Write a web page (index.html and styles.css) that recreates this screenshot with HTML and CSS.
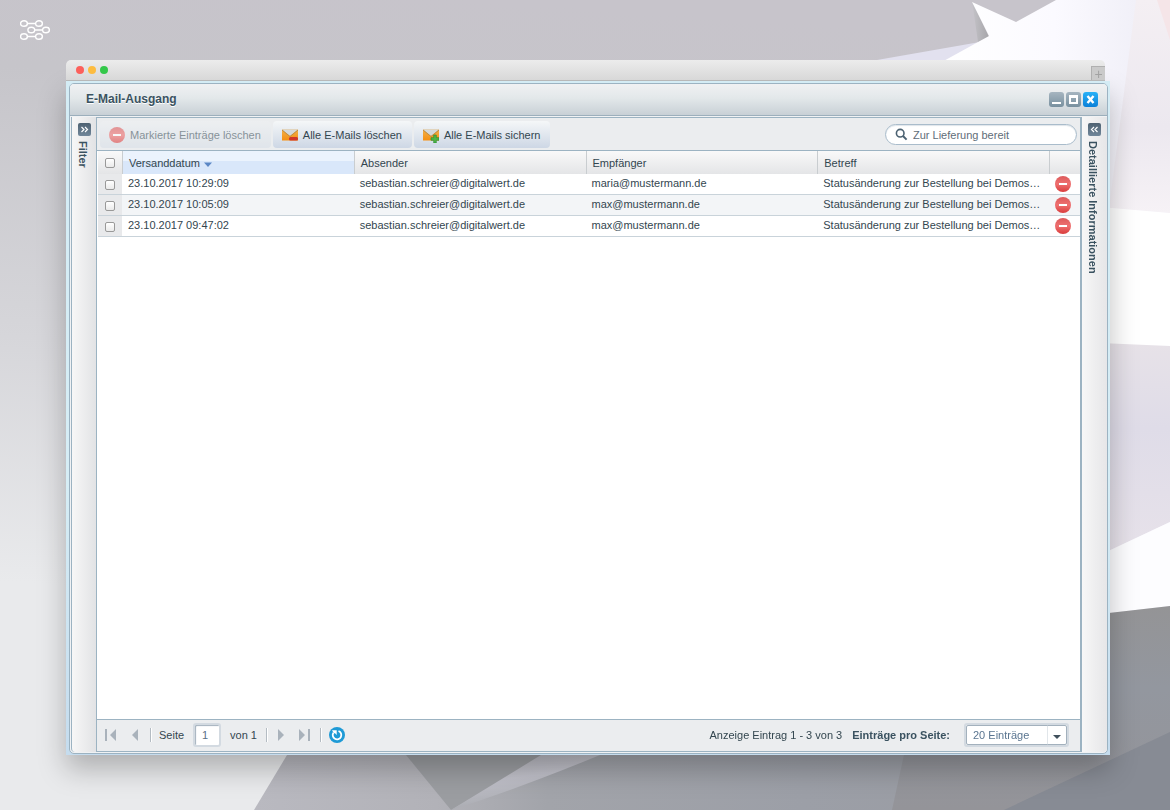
FILE: index.html
```html
<!DOCTYPE html>
<html lang="de">
<head>
<meta charset="utf-8">
<meta name="viewport" content="width=device-width, initial-scale=1">
<title>E-Mail-Ausgang</title>
<link rel="stylesheet" href="styles.css">
</head>
<body>
<svg class="backdrop" viewBox="0 0 1170 810" preserveAspectRatio="none" aria-hidden="true">
  <defs>
    <linearGradient id="wall" x1="0.4" y1="0" x2="0.3" y2="1"><stop offset="0" stop-color="#c7c4cb"/><stop offset=".12" stop-color="#c6c5ca"/><stop offset=".45" stop-color="#d6d6da"/><stop offset=".75" stop-color="#e9eaec"/><stop offset="1" stop-color="#e9eaec"/></linearGradient>
    <linearGradient id="floor" x1="0" y1="0" x2="1" y2="0"><stop offset="0" stop-color="#b9b9c0"/><stop offset=".2" stop-color="#b2b2b8"/><stop offset=".32" stop-color="#a2a4aa"/><stop offset=".6" stop-color="#9c9fa7"/><stop offset="1" stop-color="#989aa0"/></linearGradient>
    <linearGradient id="sheet" x1="0" y1="0" x2="1" y2="0"><stop offset="0" stop-color="#fff"/><stop offset=".5" stop-color="#fbfaff"/><stop offset=".85" stop-color="#f1f0f8"/><stop offset="1" stop-color="#f1eff8"/></linearGradient>
    <linearGradient id="side" x1="0" y1="0" x2="0" y2="1"><stop offset="0" stop-color="#f4eff3"/><stop offset=".6" stop-color="#ece8ef"/><stop offset="1" stop-color="#f6f2f6"/></linearGradient>
    <linearGradient id="block" x1="0" y1="0" x2="0" y2="1"><stop offset="0" stop-color="#e7e2e8"/><stop offset=".4" stop-color="#dfdce8"/><stop offset="1" stop-color="#e7e2ea"/></linearGradient>
    <linearGradient id="dark" x1="0" y1="0" x2="0" y2="1"><stop offset="0" stop-color="#949496"/><stop offset=".4" stop-color="#93979f"/><stop offset="1" stop-color="#949499"/></linearGradient>
    <linearGradient id="fold" x1="0" y1="0" x2="1" y2="0"><stop offset="0" stop-color="#c4c3c8"/><stop offset="1" stop-color="#a6a5a9"/></linearGradient>
    <linearGradient id="ray" x1="0" y1="0" x2=".35" y2="1"><stop offset="0" stop-color="#b4b4bb"/><stop offset=".5" stop-color="#c1c1ca"/><stop offset="1" stop-color="#a5a7ac"/></linearGradient>
  </defs>
  <rect width="1170" height="810" fill="url(#wall)"/>
  <path d="M877 60 980 42 1080 20V810H877Z" fill="#e2e1ef"/>
  <path d="M972 1 989 37 978 42Z" fill="url(#fold)"/>
  <path d="M972 2 1016 22 1056 0H1170V810H940V63L989 36Z" fill="url(#sheet)"/>
  <path d="M1136 0H1170V213L1109 208Z" fill="url(#side)"/>
  <path d="M1100 207 1170 213V350H1100Z" fill="#fff"/>
  <path d="M1157 0H1170V40Z" fill="#f5e5e8"/>
  <path d="M1100 343 1170 346V522L1100 555Z" fill="url(#block)"/>
  <path d="M1100 555 1170 522V606L1100 614Z" fill="#fdfdff"/>
  <path d="M287 755 254 810H1170V700H320Z" fill="url(#floor)"/>
  <path d="M406 755H545L451 810Z" fill="#9b9da1"/>
  <path d="M451 810 541 755H600Q520 788 451 810Z" fill="url(#ray)"/>
  <path d="M905 750 892 810H1170V606L1100 614Z" fill="url(#dark)"/>
  <path d="M1004 810 1170 732V810Z" fill="#878b94"/>
</svg>
<header class="brand">
  <a href="#" class="brand-link" aria-label="Startseite">
    <svg width="30" height="20" viewBox="0 0 30 20" fill="none" stroke="#fff" stroke-width="1.4"><ellipse cx="4" cy="3.5" rx="3.4" ry="2.8"/><ellipse cx="19" cy="3.5" rx="3.4" ry="2.8"/><ellipse cx="11.300" cy="10" rx="3.4" ry="2.8"/><ellipse cx="26" cy="10" rx="3.4" ry="2.8"/><ellipse cx="4" cy="16.500" rx="3.400" ry="2.800"/><ellipse cx="19" cy="16.500" rx="3.400" ry="2.800"/><path d="M7.500 3.500h8M14.700 10h8M7.500 16.500h8"/></svg>
  </a>
</header>
<main class="browser">
  <div class="chrome">
    <span class="light light-red"></span><span class="light light-yellow"></span><span class="light light-green"></span>
    <button class="new-tab" type="button" aria-label="Neuer Tab">+</button>
  </div>
  <div class="frame">
    <section class="window">
      <div class="titlebar">
        <h1 class="title">E-Mail-Ausgang</h1>
        <button class="win-btn" type="button" aria-label="Minimieren"><svg width="15" height="15" viewBox="0 0 15 15"><path d="M3 10h9v2H3z" fill="#fff"/></svg></button>
        <button class="win-btn" type="button" aria-label="Maximieren"><svg width="15" height="15" viewBox="0 0 15 15"><path fill-rule="evenodd" d="M3 3h9v9H3zM5 6v4h5V6z" fill="#fff"/></svg></button>
        <button class="win-btn win-close" type="button" aria-label="Schließen"><svg width="15" height="15" viewBox="0 0 15 15"><path d="M4.500 4 10.500 11M10.500 4 4.500 11" stroke="#fff" stroke-width="2.400"/></svg></button>
      </div>
      <div class="workspace">
        <aside class="rail rail-left">
          <button class="rail-btn" type="button" aria-label="Filter ausklappen"><svg width="13" height="13" viewBox="0 0 13 13" fill="none" stroke="#fff" stroke-width="1.200"><path d="M3.500 4 6 6.500 3.500 9M7 4l2.500 2.500L7 9"/></svg></button>
          <span class="rail-label">Filter</span>
        </aside>
        <div class="panel">
          <div class="toolbar">
            <button class="tool" type="button" disabled><svg width="16" height="16" viewBox="0 0 16 16"><use href="#minus"/></svg>Markierte Einträge löschen</button>
            <button class="tool" type="button"><svg width="16" height="16" viewBox="0 0 16 16"><use href="#mail"/><rect x="7" y="10" width="9" height="3.500" rx="1.500" fill="#cf352b"/></svg>Alle E-Mails löschen</button>
            <button class="tool" type="button"><svg width="16" height="16" viewBox="0 0 16 16"><use href="#mail"/><path d="M10.700 8h2.600v2.700H16v2.600h-2.700V16h-2.600v-2.700H8v-2.600h2.700z" fill="#4db548" stroke="#23852a" stroke-width=".6"/></svg>Alle E-Mails sichern</button>
            <label class="search"><svg width="13" height="13" viewBox="0 0 13 13" fill="none" stroke="#4c6272"><circle cx="5.200" cy="5.200" r="3.800" stroke-width="1.600"/><path d="M8 8l3.600 3.600" stroke-width="2"/></svg><input class="search-input" type="text" value="Zur Lieferung bereit" aria-label="Suche"></label>
          </div>
          <div class="grid">
            <table class="mails">
              <colgroup><col class="c-check"><col><col><col><col><col class="c-action"></colgroup>
              <thead><tr>
                <th><input class="check" type="checkbox" aria-label="Alle auswählen"></th>
                <th class="sorted">Versanddatum<svg class="sort" width="8" height="5" viewBox="0 0 8 5"><path d="M0 .5h8L4 5z" fill="#5b87c5"/></svg></th>
                <th>Absender</th><th>Empfänger</th><th>Betreff</th><th></th>
              </tr></thead>
              <tbody>
                <tr><td><input class="check" type="checkbox" aria-label="Zeile 1 auswählen"></td><td>23.10.2017 10:29:09</td><td>sebastian.schreier@digitalwert.de</td><td>maria@mustermann.de</td><td>Statusänderung zur Bestellung bei Demoshop</td><td><button class="remove" type="button" aria-label="Löschen"><svg width="16" height="16" viewBox="0 0 16 16"><use href="#minus"/></svg></button></td></tr>
                <tr><td><input class="check" type="checkbox" aria-label="Zeile 2 auswählen"></td><td>23.10.2017 10:05:09</td><td>sebastian.schreier@digitalwert.de</td><td>max@mustermann.de</td><td>Statusänderung zur Bestellung bei Demoshop</td><td><button class="remove" type="button" aria-label="Löschen"><svg width="16" height="16" viewBox="0 0 16 16"><use href="#minus"/></svg></button></td></tr>
                <tr><td><input class="check" type="checkbox" aria-label="Zeile 3 auswählen"></td><td>23.10.2017 09:47:02</td><td>sebastian.schreier@digitalwert.de</td><td>max@mustermann.de</td><td>Statusänderung zur Bestellung bei Demoshop</td><td><button class="remove" type="button" aria-label="Löschen"><svg width="16" height="16" viewBox="0 0 16 16"><use href="#minus"/></svg></button></td></tr>
              </tbody>
            </table>
          </div>
          <div class="pager">
            <div class="pager-nav">
              <button class="nav" type="button" aria-label="Erste Seite"><svg width="13" height="12" viewBox="0 0 13 12" fill="#a9b2bb"><path d="M0 0h2v12H0zM11 0v12L5 6z"/></svg></button>
              <button class="nav" type="button" aria-label="Vorherige Seite"><svg width="12" height="12" viewBox="0 0 12 12" fill="#a9b2bb"><path d="M10 0v12L4 6z"/></svg></button>
              <span class="sep"></span>
              <label class="page-label" for="page">Seite</label>
              <input class="page-input" id="page" type="text" value="1">
              <span class="page-total">von 1</span>
              <span class="sep"></span>
              <button class="nav" type="button" aria-label="Nächste Seite"><svg width="12" height="12" viewBox="0 0 12 12" fill="#a9b2bb"><path d="M3 0l6 6-6 6z"/></svg></button>
              <button class="nav" type="button" aria-label="Letzte Seite"><svg width="13" height="12" viewBox="0 0 13 12" fill="#a9b2bb"><path d="M11 0h2v12h-2zM2 0l6 6-6 6z"/></svg></button>
              <span class="sep"></span>
              <button class="nav" type="button" aria-label="Aktualisieren"><svg width="16" height="16" viewBox="0 0 16 16"><circle cx="8" cy="8" r="8" fill="#1e9ad6"/><path d="M9.500 4A4.300 4.300 0 1 1 4.400 5.700" fill="none" stroke="#fff" stroke-width="1.800"/><path d="M3 3.200h4.700v4.700L6 6.300 4.800 6.300z" fill="#fff"/></svg></button>
            </div>
            <span class="count">Anzeige Eintrag 1 - 3 von 3</span>
            <label class="size-label" for="size">Einträge pro Seite:</label>
            <span class="select"><select class="size" id="size"><option>20 Einträge</option></select><svg class="arrow" width="20" height="20" viewBox="0 0 20 20"><path d="M0 0v20" stroke="#c3cdd5"/><path d="M6 10h8l-4 4z" fill="#40505c"/></svg></span>
          </div>
        </div>
        <aside class="rail rail-right">
          <button class="rail-btn" type="button" aria-label="Details ausklappen"><svg width="13" height="13" viewBox="0 0 13 13" fill="none" stroke="#fff" stroke-width="1.200"><path d="M6 4 3.500 6.500 6 9M9.500 4 7 6.500 9.500 9"/></svg></button>
          <span class="rail-label">Detaillierte Informationen</span>
        </aside>
      </div>
    </section>
  </div>
</main>
<svg class="symbols" width="0" height="0" aria-hidden="true">
  <defs>
    <linearGradient id="red" x1="0" y1="0" x2="0" y2="1"><stop offset="0" stop-color="#dc5a5b"/><stop offset=".5" stop-color="#ef7070"/><stop offset="1" stop-color="#d93c3c"/></linearGradient>
    <linearGradient id="orange" x1="0" y1="0" x2="0" y2="1"><stop offset="0" stop-color="#f2b04a"/><stop offset="1" stop-color="#f58f12"/></linearGradient>
    <symbol id="minus" viewBox="0 0 16 16"><circle cx="8" cy="8" r="8" fill="url(#red)"/><path d="M4 7h8v2H4z" fill="#fff"/></symbol>
    <symbol id="mail" viewBox="0 0 16 16"><path d="M0 2.500h16v11H0z" fill="url(#orange)"/><path d="M0 2.500h16L8 9z" fill="#d5d9dc"/><path d="M0 3l8 6.500L16 3" fill="none" stroke="#b98a45" stroke-width=".9"/></symbol>
  </defs>
</svg>
</body>
</html>
```
FILE: styles.css
```css
* { box-sizing: border-box; }

body {
  margin: 0;
  min-height: 100vh;
  display: flex;
  flex-direction: column;
  font: 11px/14px "Liberation Sans", Arial, sans-serif;
  color: #33464f;
}

button, input, select { font: inherit; color: inherit; margin: 0; }
button { padding: 0; border: 0; background: none; }
svg { display: block; flex: none; }

.backdrop { position: fixed; inset: 0; width: 100%; height: 100%; z-index: -1; }
.symbols { position: absolute; }

.brand { display: flex; padding: 20px; }

.browser {
  flex: 1;
  display: flex;
  flex-direction: column;
  margin: 0 60px 55px 66px;
}

.chrome {
  position: relative;
  z-index: 1;
  display: flex;
  align-items: center;
  gap: 4px;
  height: 21px;
  margin-right: 5px;
  padding-left: 10px;
  border-bottom: 1px solid #b8b8b8;
  border-radius: 5px 5px 0 0;
  background: linear-gradient(#ececec, #d8d8d8);
}
.light { width: 8px; height: 8px; border-radius: 50%; }
.light-red { background: #fc605b; }
.light-yellow { background: #fdbc40; }
.light-green { background: #34c84a; }
.new-tab {
  align-self: flex-end;
  width: 14px;
  height: 14px;
  margin-left: auto;
  border: solid #b0b0b0;
  border-width: 1px 0 0 1px;
  background: #cacaca;
  color: #a2a2a2;
  font-size: 14px;
  line-height: 12px;
}

.frame {
  flex: 1;
  display: flex;
  padding: 2px 2px 1px 3px;
  background: linear-gradient(#d4ecf5, #d6edf5 60%, #c5dcee);
  box-shadow: 0 14px 26px rgba(0, 0, 0, .25);
}
.window {
  flex: 1;
  min-width: 0;
  display: flex;
  flex-direction: column;
  border: 1px solid #9cb3c2;
  border-radius: 5px;
  background: #f0f2f4;
}
.titlebar {
  display: flex;
  align-items: center;
  gap: 2px;
  height: 32px;
  padding: 0 9px 0 16px;
  border-bottom: 1px solid #9cafbc;
  border-radius: 4px 4px 0 0;
  background: linear-gradient(#f0f1f3, #e3e8ea 45%, #c8d0d6);
}
.title {
  margin: 0 auto 0 0;
  padding-bottom: 2px;
  font-size: 12px;
  line-height: 16px;
  color: #3a5260;
  text-shadow: 0 1px 0 #fff;
}
.win-btn { border-radius: 3px; background: linear-gradient(#a6b5c0, #78909f); }
.win-close { background: linear-gradient(#28b1f7, #0b80d8); }

.workspace { flex: 1; display: flex; padding: 1px 0 1px 1px; }

.rail {
  display: flex;
  flex-direction: column;
  align-items: center;
  gap: 5px;
  width: 25px;
  padding-top: 6px;
  background: linear-gradient(90deg, #f7f7f7, #e2e3e5);
}
.rail-left { border-left: 1px solid #9cb3c2; border-radius: 0 0 0 4px; }
.rail-right { background: linear-gradient(90deg, #f7f7f7, #e6e6e8); border-radius: 0 0 4px 0; }
.rail-btn { border-radius: 2px; background: linear-gradient(#4f6272, #71879a); }
.rail-label {
  writing-mode: vertical-rl;
  margin-right: 3px;
  font-weight: bold;
  color: #3a5260;
}

.panel {
  flex: 1;
  min-width: 0;
  display: flex;
  flex-direction: column;
  border: solid #9cb3c2;
  border-width: 1px 2px 1px 1px;
  background: #fff;
}
.toolbar {
  display: flex;
  align-items: center;
  gap: 2px;
  height: 33px;
  padding: 1px 3px 0;
  border-bottom: 1px solid #9cb3c2;
  background: #ebedef;
}
.tool {
  display: flex;
  align-items: center;
  gap: 5px;
  height: 27px;
  padding: 0 10px 0 9px;
  border-radius: 4px;
  background: linear-gradient(#f5f7f8, #cdd7e5);
  white-space: nowrap;
}
.tool:disabled { opacity: .6; color: #43555f; background: linear-gradient(#eff1f3, #d9e0e8); }
.search {
  display: flex;
  align-items: center;
  gap: 5px;
  width: 192px;
  height: 21px;
  margin-left: auto;
  padding: 0 9px;
  border: 1px solid #a9bccb;
  border-radius: 11px;
  background: #fff;
  box-shadow: inset 0 1px 1px #dfe5ea;
}
.search-input {
  flex: 1;
  min-width: 0;
  padding: 0;
  border: 0;
  outline: 0;
  background: none;
  color: #5f6d78;
}

.grid { flex: 1; padding-left: 1px; }
.mails {
  width: 100%;
  table-layout: fixed;
  border-collapse: separate;
  border-spacing: 0;
}
.c-check { width: 24px; }
.c-action { width: 31px; }
.mails th {
  height: 23px;
  padding: 0 6px;
  border-left: 1px solid #c9cdd0;
  background: linear-gradient(#f9f9f9, #e4e5e7);
  font-weight: normal;
  text-align: left;
}
.mails th.sorted { background: linear-gradient(#ebf3fd 45%, #d9e7fa 45%); }
.sort { display: inline-block; margin-left: 4px; }
.mails td {
  height: 21px;
  padding: 0 6px 2px;
  border-bottom: 1px solid #c9d3da;
  overflow: hidden;
  text-overflow: ellipsis;
  white-space: nowrap;
}
.mails tbody tr:nth-child(even) { background: #f3f5f7; }
.mails tr > :first-child { padding: 1px 0 0 7px; border-left: 0; }
.mails td:first-child { background: #e8e9eb; }
.mails td:last-child { padding: 0 6px; }
.check {
  appearance: none;
  display: block;
  width: 10px;
  height: 10px;
  border: 1px solid #999;
  border-radius: 2px;
  background: linear-gradient(#fff, #eaeaea);
}
.remove { display: block; }

.pager {
  display: flex;
  align-items: center;
  height: 32px;
  padding: 0 11px 1px 8px;
  border-top: 1px solid #9cb3c2;
  background: #ebedef;
}
.pager-nav { display: flex; align-items: center; margin-right: auto; }
.nav { margin-right: 10px; }
.sep { width: 2px; height: 14px; margin-right: 7px; border-left: 1px solid #b4bcc3; border-right: 1px solid #fff; }
.page-input {
  width: 28px;
  height: 24px;
  margin: 0 9px;
  padding: 0 0 0 7px;
  border: 2px solid #d3dae1;
  border-radius: 3px;
  background: #fff;
  color: #5a7086;
  box-shadow: inset 1px 1px 1px #a3b1bd;
}
.page-total { margin-right: 9px; }
.size-label { margin: 0 14px 0 10px; font-weight: bold; color: #3a5260; }
.select {
  position: relative;
  display: flex;
  border: 2px solid #d3dae1;
  border-radius: 3px;
}
.size {
  appearance: none;
  width: 101px;
  height: 20px;
  padding: 0 24px 0 6px;
  border: 1px solid #a3b1bd;
  border-radius: 2px;
  background: #fff;
  color: #5a7590;
}
.arrow { position: absolute; right: 0; top: 0; pointer-events: none; }
```
